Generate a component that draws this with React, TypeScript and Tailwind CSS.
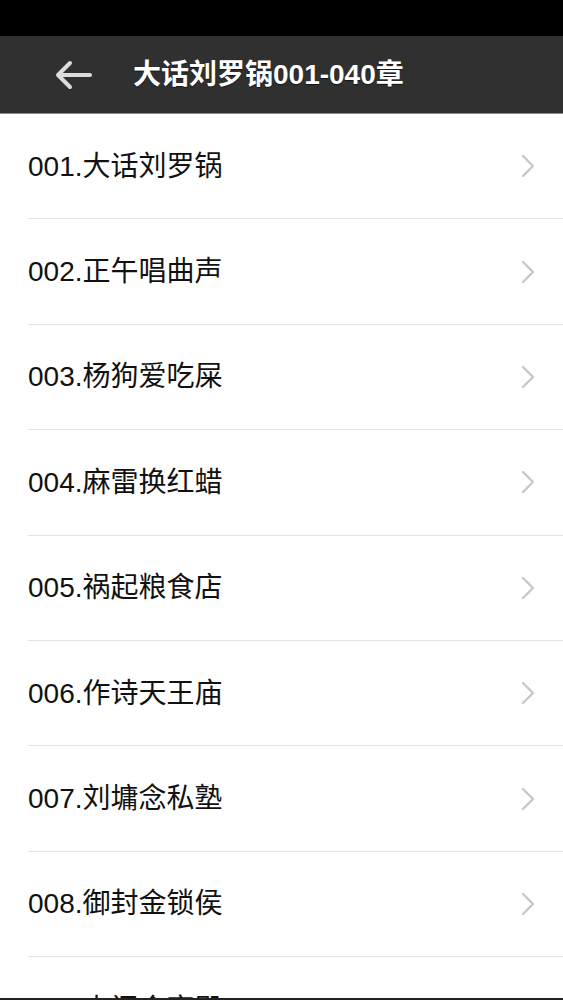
const CHAPTERS = [
  "001.大话刘罗锅",
  "002.正午唱曲声",
  "003.杨狗爱吃屎",
  "004.麻雷换红蜡",
  "005.祸起粮食店",
  "006.作诗天王庙",
  "007.刘墉念私塾",
  "008.御封金锁侯",
  "009.大闹金銮殿",
];

const FONT = "font-['Liberation_Sans','Noto_Sans_CJK_SC',sans-serif]";

function BackArrow() {
  return (
    <svg width="40" height="32" viewBox="0 0 40 32" fill="none">
      <path
        d="M37 16H5M17 4L5 16l12 12"
        stroke="#dcdcdc"
        strokeWidth="4"
        strokeLinecap="round"
        strokeLinejoin="round"
      />
    </svg>
  );
}

function Chevron() {
  return (
    <svg width="16" height="24" viewBox="0 0 16 24" fill="none">
      <path
        d="M3 2l10 10L3 22"
        stroke="#c8c8cc"
        strokeWidth="2.4"
        strokeLinecap="round"
        strokeLinejoin="round"
      />
    </svg>
  );
}

export default function App() {
  return (
    <div className={`flex h-screen flex-col overflow-hidden bg-white ${FONT}`}>
      <div className="h-[36px] shrink-0 bg-black" />
      <header className="flex h-[78px] shrink-0 items-center border-b border-[#8e8e8e] bg-[#303030] pl-[53px]">
        <BackArrow />
        <h1 className="ml-[40px] text-[28px] font-semibold text-white [text-shadow:0_1px_1px_rgba(0,0,0,0.6)]">
          大话刘罗锅001-040章
        </h1>
      </header>
      <main className="min-h-0 flex-1 overflow-hidden pl-[28px]">
        {CHAPTERS.map((title) => (
          <div
            key={title}
            className="flex h-[105.4px] items-center justify-between border-b border-[#e2e2e2] pr-[27px]"
          >
            <span className="pt-[1px] text-[28px] text-[#111]">{title}</span>
            <Chevron />
          </div>
        ))}
      </main>
      <div className="h-[2px] shrink-0 bg-[#222]" />
    </div>
  );
}
